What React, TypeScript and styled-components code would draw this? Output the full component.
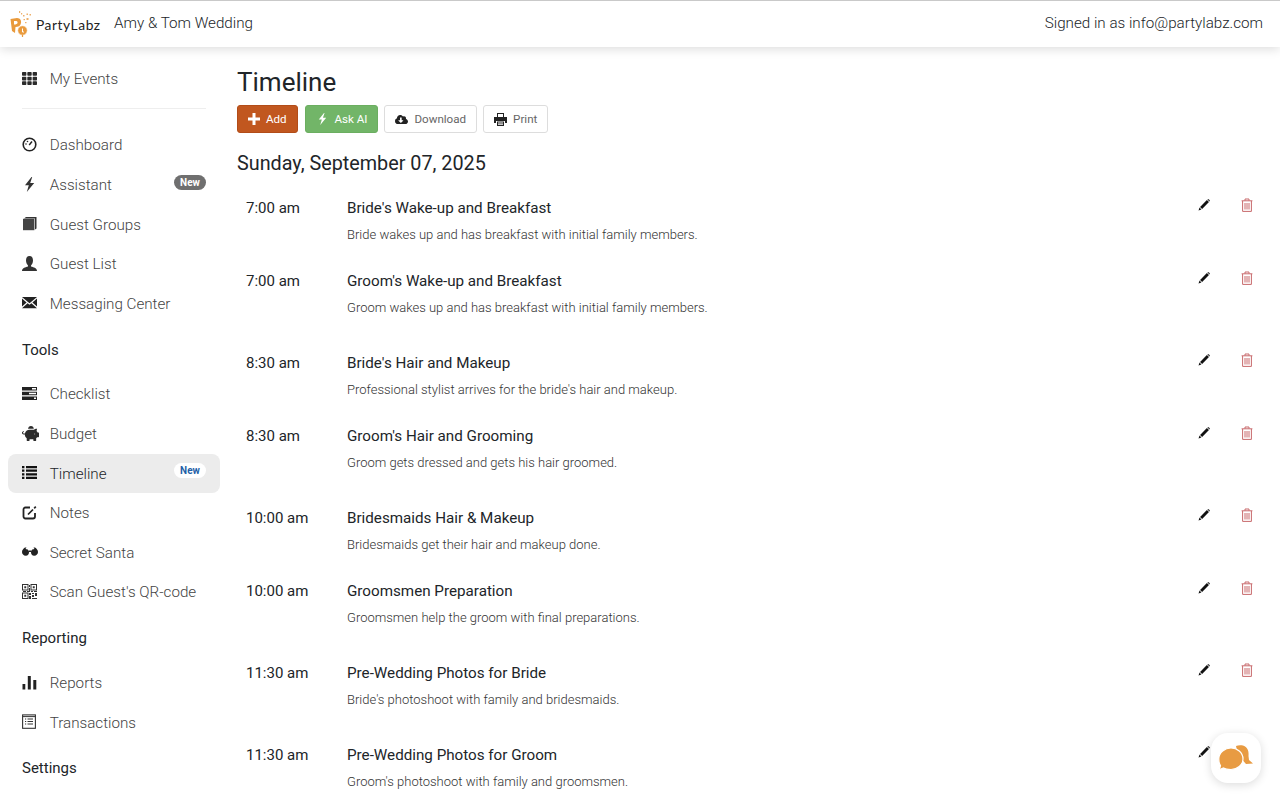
import React from "react";
import styled, { createGlobalStyle } from "styled-components";
import { FaCloudDownloadAlt, FaPiggyBank, FaTh } from "react-icons/fa";

const GlobalStyle = createGlobalStyle`
  html, body {
    margin: 0;
    padding: 0;
    height: 100%;
    overflow: hidden;
    background: #ffffff;
  }
  body {
    font-family: Roboto, "Liberation Sans", sans-serif;
    color: #212529;
  }
  * { box-sizing: border-box; }
`;

const Page = styled.div`
  height: 800px;
  display: flex;
  flex-direction: column;
  overflow: hidden;
  position: relative;
`;

const Header = styled.header`
  height: 47px;
  flex: none;
  border-top: 1px solid #c9c9c9;
  padding: 0 17px 2px 10px;
  display: flex;
  align-items: center;
  background: #fff;
  box-shadow: 0 2px 10px rgba(0, 0, 0, 0.14);
  position: relative;
  z-index: 2;
`;

const Brand = styled.div`
  display: flex;
  align-items: center;
  width: 104px;
  flex: none;
`;

const BrandName = styled.span`
  font-family: Lato, sans-serif;
  font-size: 13.8px;
  letter-spacing: 0.55px;
  color: #222;
  margin-top: 3px;
`;

const EventName = styled.div`
  font-size: 15.2px;
  font-weight: 300;
  color: #212529;
`;

const SignedIn = styled.div`
  margin-left: auto;
  font-size: 15.2px;
  font-weight: 300;
  color: #212529;
`;

const Body = styled.div`
  flex: 1;
  display: flex;
  min-height: 0;
`;

const Sidebar = styled.nav`
  width: 229px;
  flex: none;
  padding: 12.5px 9px 0 8px;
`;

const Divider = styled.hr`
  border: 0;
  border-top: 1px solid #eeeeee;
  margin: 9px 14px 16.6px;
`;

const NavItem = styled.div<{ $active?: boolean }>`
  width: 212px;
  height: 39.6px;
  padding: 0 14px;
  display: flex;
  align-items: center;
  border-radius: 8px;
  font-size: 15.2px;
  font-weight: 300;
  color: ${({ $active }) => ($active ? "#212529" : "#444")};
  background: ${({ $active }) => ($active ? "#ececec" : "transparent")};
`;

const NavIcon = styled.span`
  width: 27.7px;
  flex: none;
  display: flex;
  align-items: center;
  color: #2b2b2b;
  margin-top: -2px;
  svg { display: block; }
`;

const NavBadge = styled.span<{ $light?: boolean }>`
  margin-left: auto;
  margin-top: -6px;
  width: 32px;
  height: 15px;
  border-radius: 8px;
  display: flex;
  align-items: center;
  justify-content: center;
  font-size: 10px;
  font-weight: 700;
  color: ${({ $light }) => ($light ? "#1f5fa8" : "#fff")};
  background: ${({ $light }) => ($light ? "#fff" : "#6f6f6f")};
`;

const SectionTitle = styled.div`
  height: 51px;
  padding: 1px 14px 0;
  display: flex;
  align-items: center;
  font-size: 15px;
  font-weight: 400;
  color: #212529;
`;

const Main = styled.main`
  flex: 1;
  min-width: 0;
  padding: 19px 27px 0 8px;
`;

const Title = styled.h1`
  margin: 0;
  font-size: 26px;
  line-height: 32px;
  font-weight: 400;
  color: #212529;
`;

const Toolbar = styled.div`
  display: flex;
  margin-top: 7px;
`;

const ToolButton = styled.button<{ $variant?: "add" | "ai" }>`
  height: 28px;
  padding: 0 10px;
  margin-right: ${({ $variant }) => ($variant === "add" ? "7px" : "6px")};
  display: flex;
  align-items: center;
  gap: ${({ $variant }) => ($variant === "add" ? "6px" : $variant === "ai" ? "8px" : "6px")};
  border-radius: 3px;
  font: 400 11.6px Roboto, sans-serif;
  color: ${({ $variant }) => ($variant ? "#fff" : "#666")};
  background: ${({ $variant }) =>
    $variant === "add" ? "#c1571f" : $variant === "ai" ? "#72b568" : "#fff"};
  border: 1px solid
    ${({ $variant }) =>
      $variant === "add" ? "#b24c18" : $variant === "ai" ? "#6bae60" : "#dddddd"};
  svg {
    display: block;
    color: ${({ $variant }) => ($variant ? "#fff" : "#222")};
  }
`;

const DateHeading = styled.h2`
  margin: 19px 0 9px;
  font-size: 19.8px;
  line-height: 24px;
  font-weight: 400;
  color: #212529;
`;

const EventGroup = styled.div`
  margin-bottom: 9px;
`;

const Row = styled.div`
  height: 73px;
  display: flex;
  padding: 13px 0 0 9px;
`;

const Time = styled.div`
  width: 101px;
  flex: none;
  font-size: 15px;
  line-height: 20px;
  color: #212529;
`;

const RowText = styled.div`
  flex: 1;
  min-width: 0;
`;

const RowTitle = styled.div`
  font-size: 15.2px;
  line-height: 20px;
  color: #212529;
`;

const RowDesc = styled.div`
  margin-top: 8.5px;
  font-size: 13px;
  line-height: 16px;
  font-weight: 300;
  color: #333;
`;

const RowActions = styled.div`
  display: flex;
  align-items: center;
  gap: 31px;
  width: 55px;
  margin-top: 0.4px;
  height: 14px;
  flex: none;
  svg { display: block; }
`;

const ChatButton = styled.div`
  position: absolute;
  left: 1211px;
  top: 733px;
  width: 50px;
  height: 50px;
  border-radius: 17px;
  background: #fff;
  box-shadow: 0 2px 10px rgba(0, 0, 0, 0.14);
  display: flex;
  align-items: center;
  justify-content: center;
`;

const Logo = () => (
  <svg width="26" height="28" viewBox="0 0 26 28">
    <path
      fill="#e99a3c"
      fillRule="evenodd"
      d="M.5 10 L7 9 C10.500 9 11.500 12 11 14 C10.500 17 8 18 5.500 18 L5 24 L2 22 Z M4 12 V15.500 C6 15.500 7.600 15 7.600 13.500 C7.600 12 6 11.700 4 12 Z"
    />
    <circle cx="12.500" cy="21.500" r="4.800" fill="#e99a3c" stroke="#fff" strokeWidth=".7" />
    <path d="M12.500 19.500 v3.500 h1.500" stroke="#fff" strokeWidth="1" fill="none" />
    <path d="M12.500 26 v2" stroke="#e99a3c" strokeWidth="1.200" />
    <g fill="#eeb06a">
      <rect x="9" y="2" width="1.200" height="2" />
      <rect x="11" y="4" width="1.200" height="1.500" />
      <rect x="13" y="6" width="1.500" height="1.500" />
      <rect x="16.500" y="4.500" width="1.500" height="1.500" />
      <rect x="19.500" y="5" width="1.500" height="1.500" />
      <rect x="13.500" y="10" width="1.500" height="1.200" />
      <rect x="16.500" y="9" width="2" height="2" />
      <rect x="15" y="13" width="1.500" height="1.200" />
    </g>
  </svg>
);

const DashboardIcon = () => (
  <svg width="15" height="15" viewBox="0 0 15 15">
    <circle cx="7.500" cy="7.500" r="6.300" fill="none" stroke="#222" strokeWidth="1.600" />
    <path d="M7.200 8 L10 4.500" stroke="#222" strokeWidth="1.400" />
    <circle cx="4" cy="7" r=".8" fill="#222" />
    <circle cx="5.500" cy="4.500" r=".8" fill="#222" />
  </svg>
);

const BoltIcon = ({ color = "#333", height = 15 }: { color?: string; height?: number }) => (
  <svg width={(height * 11) / 15} height={height} viewBox="0 0 11 15" style={{ marginLeft: 2 }}>
    <path fill={color} d="M7.500 0 L1 8.200 H4.800 L2.800 15 L10.200 6 H6.200 L8.200 0 Z" />
  </svg>
);

const BookIcon = () => (
  <svg width="15" height="15" viewBox="0 0 15 15">
    <path fill="#333" d="M2 2.500 L4 1 H14.500 V12.500 L13 13.500 V2.500 H3 Z" />
    <rect x="1" y="2.800" width="11.400" height="11.400" fill="#444" />
  </svg>
);

const UserIcon = () => (
  <svg width="15" height="15" viewBox="0 0 15 15">
    <path
      fill="#333"
      d="M7.500 0 C10 0 11 2 11 4.500 C11 6.500 10 8.500 9 9.500 V10.500 C12 11.500 15 12 15 15 H0 C0 12 3 11.500 6 10.500 V9.500 C5 8.500 4 6.500 4 4.500 C4 2 5 0 7.500 0 Z"
    />
  </svg>
);

const MailIcon = () => (
  <svg width="15" height="13" viewBox="0 0 15 13">
    <path fill="#222" d="M0 1 H15 L7.500 7.200 Z M0 2.600 L4.600 6.400 0 10.600 Z M15 2.600 L10.400 6.400 15 10.600 Z M5.600 7.300 L7.500 8.800 9.400 7.300 15 12.200 H0 Z" />
  </svg>
);

const ChecklistIcon = () => (
  <svg width="15" height="13" viewBox="0 0 15 13">
    <path fill="#222" fillRule="evenodd" d="M0 0 H15 V3.500 H0 Z M10 1 H14 V2.500 H10 Z M0 4.700 H15 V8.200 H0 Z M7 5.700 H14 V7.200 H7 Z M0 9.400 H15 V12.900 H0 Z M12 10.400 H14 V11.900 H12 Z" />
  </svg>
);

const ListIcon = () => (
  <svg width="15" height="13" viewBox="0 0 15 13">
    <path fill="#111" d="M0 0 H2.400 V2.200 H0 Z M4 0 H15 V2.200 H4 Z M0 3.600 H2.400 V5.800 H0 Z M4 3.600 H15 V5.800 H4 Z M0 7.200 H2.400 V9.400 H0 Z M4 7.200 H15 V9.400 H4 Z M0 10.800 H2.400 V13 H0 Z M4 10.800 H15 V13 H4 Z" />
  </svg>
);

const NotesIcon = () => (
  <svg width="15" height="15" viewBox="0 0 15 15">
    <path fill="none" stroke="#222" strokeWidth="1.800" d="M13 8 V11.500 C13 12.600 12.400 13.500 11 13.500 H3.500 C2.200 13.500 1.500 12.600 1.500 11.500 V4.500 C1.500 3.200 2.200 2.500 3.500 2.500 H8" />
    <path stroke="#222" strokeWidth="1.700" d="M6 9.500 L11 4.500" />
    <path stroke="#222" strokeWidth="1.700" d="M12.200 3.300 L13.800 1.700" />
  </svg>
);

const SunglassesIcon = () => (
  <svg width="16" height="9" viewBox="0 0 16 9">
    <path
      fill="#222"
      d="M3 .5 L4.500 .5 L3.500 2 C5 2 6.800 2.800 7 4.500 C7.300 7 6 8.700 3.800 8.700 C1.500 8.700 0 7 0 5 C0 3 1.500 1.500 3 .5 Z M13 .5 L11.500 .5 L12.500 2 C11 2 9.200 2.800 9 4.500 C8.700 7 10 8.700 12.200 8.700 C14.500 8.700 16 7 16 5 C16 3 14.500 1.500 13 .5 Z M7 3.500 H9 V5 H7 Z"
    />
  </svg>
);

const QrIcon = () => (
  <svg width="15" height="15" viewBox="0 0 15 15">
    <g fill="none" stroke="#333" strokeWidth="1">
      <rect x=".5" y=".5" width="5.500" height="5.500" />
      <rect x="9" y=".5" width="5.500" height="5.500" />
      <rect x=".5" y="9" width="5.500" height="5.500" />
    </g>
    <path
      fill="#333"
      d="M2.300 2.300 H4.200 V4.200 H2.300 Z M10.800 2.300 H12.700 V4.200 H10.800 Z M2.300 10.800 H4.200 V12.700 H2.300 Z M7 1 H8 V3 H7 Z M7 4 H8 V7 H7 Z M1 7 H4 V8 H1 Z M5 7 H8 V8 H5 Z M9 7 H11 V8 H9 Z M12 7 H15 V8 H12 Z M7 9 H9 V11 H7 Z M10 9 H12 V10 H10 Z M13 9 H15 V12 H13 Z M10 11 H12 V13 H10 Z M7 12 H9 V15 H7 Z M10 14 H15 V15 H10 Z"
    />
  </svg>
);

const StatsIcon = () => (
  <svg width="15" height="15" viewBox="0 0 15 15">
    <path fill="#222" d="M.5 9 H3.300 V14.500 H.5 Z M5.800 1 H8.800 V14.500 H5.800 Z M11.300 5 H14.300 V14.500 H11.300 Z" />
  </svg>
);

const TransactionsIcon = () => (
  <svg width="14" height="15" viewBox="0 0 14 15">
    <rect x=".6" y=".9" width="12.800" height="13.400" fill="none" stroke="#333" strokeWidth="1.100" />
    <path stroke="#333" d="M.5 2.600 H13.500 M3 5 H4.200 M5.500 5 H11 M3 7.500 H4.200 M5.500 7.500 H11 M3 10 H4.200 M5.500 10 H11" />
  </svg>
);

const PlusIcon = () => (
  <svg width="12" height="12" viewBox="0 0 12 12">
    <path fill="#fff" d="M4.500 0 H7.500 V4.500 H12 V7.500 H7.500 V12 H4.500 V7.500 H0 V4.500 H4.500 Z" />
  </svg>
);

const PrintIcon = () => (
  <svg width="13" height="13" viewBox="0 0 13 13">
    <path fill="#222" fillRule="evenodd" d="M3 0 H10 V4 H13 V10 H11 V8 H2 V10 H0 V4 H3 Z M4 1 V4 H9 V1 Z" />
    <path fill="#222" fillRule="evenodd" d="M3 8.500 H10 V13 H3 Z M4 9.500 V10.500 H9 V9.500 Z M4 11.200 V12 H9 V11.200 Z" />
  </svg>
);

const PencilIcon = () => (
  <svg width="12" height="12" viewBox="0 0 14 14">
    <path fill="#111" d="M10.400 1.200 L12.800 3.600 L4.800 11.600 L2.400 9.200 Z M1.800 10 L4 12.200 L.6 13.400 Z" />
    <path fill="#111" d="M11 .6 C11.600 0 12.200 0 12.800 .6 L13.400 1.200 C14 1.800 14 2.400 13.400 3 Z" />
  </svg>
);

const TrashIcon = () => (
  <svg width="12" height="14" viewBox="0 0 12 14">
    <g fill="none" stroke="#c8696b" strokeWidth="1">
      <path d="M.6 2.800 H11.400 M4 2.600 V1 H8 V2.600" />
      <path d="M1.600 3 V13.400 H10.400 V3" />
      <path d="M4 5 V11.500 M6 5 V11.500 M8 5 V11.500" />
    </g>
  </svg>
);

const ChatIcon = () => (
  <svg width="36" height="26" viewBox="0 0 36 26">
    <path fill="#e89b42" d="M18 1 C20 0 23 0 25 .5 C30 2 31 7 30.500 11 L31 15 L35 18.500 L28 19 L20 10 Z" />
    <path
      fill="#e89b42"
      stroke="#fff"
      strokeWidth="1.200"
      d="M13 3 C19 3 25 7.500 25 14 C25 20 19 24.500 13 24.500 C10 24.500 7 24 5.500 23 L.5 25 C2 23 2.500 21.500 2.500 20.500 C1 18.500 .8 16 .8 14 C.8 7.500 7 3 13 3 Z"
    />
  </svg>
);

type NavEntry = { label: string; icon: React.ReactNode; badge?: "dark" | "light"; active?: boolean };

const mainNav: NavEntry[] = [
  { label: "Dashboard", icon: <DashboardIcon /> },
  { label: "Assistant", icon: <BoltIcon />, badge: "dark" },
  { label: "Guest Groups", icon: <BookIcon /> },
  { label: "Guest List", icon: <UserIcon /> },
  { label: "Messaging Center", icon: <MailIcon /> },
];

const toolsNav: NavEntry[] = [
  { label: "Checklist", icon: <ChecklistIcon /> },
  { label: "Budget", icon: <FaPiggyBank size={17} /> },
  { label: "Timeline", icon: <ListIcon />, badge: "light", active: true },
  { label: "Notes", icon: <NotesIcon /> },
  { label: "Secret Santa", icon: <SunglassesIcon /> },
  { label: "Scan Guest's QR-code", icon: <QrIcon /> },
];

const reportingNav: NavEntry[] = [
  { label: "Reports", icon: <StatsIcon /> },
  { label: "Transactions", icon: <TransactionsIcon /> },
];

const timeline = [
  [
    { time: "7:00 am", title: "Bride's Wake-up and Breakfast", desc: "Bride wakes up and has breakfast with initial family members." },
    { time: "7:00 am", title: "Groom's Wake-up and Breakfast", desc: "Groom wakes up and has breakfast with initial family members." },
  ],
  [
    { time: "8:30 am", title: "Bride's Hair and Makeup", desc: "Professional stylist arrives for the bride's hair and makeup." },
    { time: "8:30 am", title: "Groom's Hair and Grooming", desc: "Groom gets dressed and gets his hair groomed." },
  ],
  [
    { time: "10:00 am", title: "Bridesmaids Hair & Makeup", desc: "Bridesmaids get their hair and makeup done." },
    { time: "10:00 am", title: "Groomsmen Preparation", desc: "Groomsmen help the groom with final preparations." },
  ],
  [{ time: "11:30 am", title: "Pre-Wedding Photos for Bride", desc: "Bride's photoshoot with family and bridesmaids." }],
  [{ time: "11:30 am", title: "Pre-Wedding Photos for Groom", desc: "Groom's photoshoot with family and groomsmen." }],
];

const NavList = ({ items }: { items: NavEntry[] }) => (
  <>
    {items.map((item) => (
      <NavItem key={item.label} $active={item.active}>
        <NavIcon>{item.icon}</NavIcon>
        {item.label}
        {item.badge && <NavBadge $light={item.badge === "light"}>New</NavBadge>}
      </NavItem>
    ))}
  </>
);

export default function App() {
  return (
    <Page>
      <GlobalStyle />
      <Header>
        <Brand>
          <Logo />
          <BrandName>PartyLabz</BrandName>
        </Brand>
        <EventName>Amy &amp; Tom Wedding</EventName>
        <SignedIn>Signed in as info@partylabz.com</SignedIn>
      </Header>
      <Body>
        <Sidebar>
          <NavItem>
            <NavIcon>
              <FaTh size={15} />
            </NavIcon>
            My Events
          </NavItem>
          <Divider />
          <NavList items={mainNav} />
          <SectionTitle>Tools</SectionTitle>
          <NavList items={toolsNav} />
          <SectionTitle>Reporting</SectionTitle>
          <NavList items={reportingNav} />
          <SectionTitle>Settings</SectionTitle>
        </Sidebar>
        <Main>
          <Title>Timeline</Title>
          <Toolbar>
            <ToolButton $variant="add">
              <PlusIcon />
              Add
            </ToolButton>
            <ToolButton $variant="ai">
              <BoltIcon color="#fff" height={12} />
              Ask AI
            </ToolButton>
            <ToolButton>
              <FaCloudDownloadAlt size={13} />
              Download
            </ToolButton>
            <ToolButton>
              <PrintIcon />
              Print
            </ToolButton>
          </Toolbar>
          <DateHeading>Sunday, September 07, 2025</DateHeading>
          {timeline.map((group, i) => (
            <EventGroup key={i}>
              {group.map((row) => (
                <Row key={row.title}>
                  <Time>{row.time}</Time>
                  <RowText>
                    <RowTitle>{row.title}</RowTitle>
                    <RowDesc>{row.desc}</RowDesc>
                  </RowText>
                  <RowActions>
                    <PencilIcon />
                    <TrashIcon />
                  </RowActions>
                </Row>
              ))}
            </EventGroup>
          ))}
        </Main>
      </Body>
      <ChatButton>
        <ChatIcon />
      </ChatButton>
    </Page>
  );
}
